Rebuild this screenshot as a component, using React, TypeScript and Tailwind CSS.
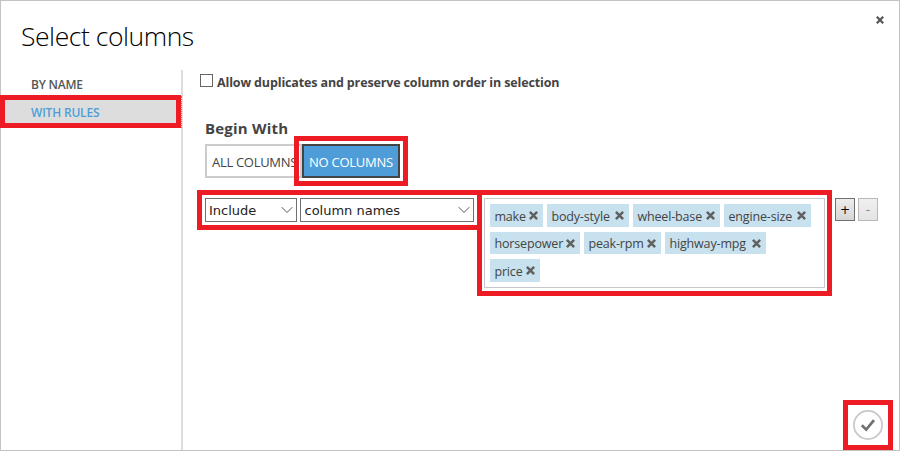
import React from "react";

type Tag = { name: string; box: string; text: string };

const tagRows: { height: string; tags: Tag[] }[] = [
  {
    height: "h-[23px]",
    tags: [
      { name: "make", box: "w-[53px]", text: "w-[31px]" },
      { name: "body-style", box: "w-[82px]", text: "w-[60px]" },
      { name: "wheel-base", box: "w-[87px]", text: "w-[65px]" },
      { name: "engine-size", box: "w-[87px]", text: "w-[65px]" },
    ],
  },
  {
    height: "h-[22px]",
    tags: [
      { name: "horsepower", box: "w-[90px]", text: "w-[68px]" },
      { name: "peak-rpm", box: "w-[77px]", text: "w-[55px]" },
      { name: "highway-mpg", box: "w-[101px]", text: "w-[79px]" },
    ],
  },
  {
    height: "h-[23px]",
    tags: [{ name: "price", box: "w-[50px]", text: "w-[28px]" }],
  },
];

function Cross({ className }: { className: string }) {
  return (
    <svg viewBox="0 0 9 9" className={className}>
      <path d="M.9.9 8.1 8.1M8.1.9.9 8.1" fill="none" stroke="currentColor" strokeWidth="2.5" />
    </svg>
  );
}

function Select({ label, className }: { label: string; className: string }) {
  return (
    <div className={`flex h-6 items-center justify-between border border-[#707070] bg-white pr-[3px] ${className}`}>
      <span className="pt-[2px] font-['DejaVu_Sans',sans-serif] text-[13px] leading-[22px] text-[#222]">{label}</span>
      <svg viewBox="0 0 12 8" className="h-2 w-3 shrink-0 text-[#555]">
        <path d="M.7 1.2 6 6.5 11.3 1.2" fill="none" stroke="currentColor" strokeWidth="1" />
      </svg>
    </div>
  );
}

function Highlight({ className }: { className: string }) {
  return <div className={`pointer-events-none absolute border-[5px] border-[#ed1c24] ${className}`} />;
}

export default function App() {
  return (
    <div className="relative flex h-[451px] w-[900px] flex-col border border-[#c3c3c3] bg-white font-['Open_Sans','Noto_Sans',sans-serif] whitespace-nowrap text-[#444]">
      <header className="flex h-[69px] shrink-0 justify-between pr-[15px] pl-5">
        <h1 className="pt-[15px] text-[26.5px] leading-[40px] font-light tracking-[-0.45px] text-black">Select columns</h1>
        <Cross className="mt-[15px] h-2 w-2 text-[#555]" />
      </header>

      <div className="flex min-h-0 flex-1">
        <nav className="flex w-[182px] shrink-0 flex-col border-r-2 border-[#ddd] text-[12px] font-semibold">
          <div className="h-[26px] pl-[30px] leading-[29px] tracking-[-0.2px] text-[#555]">BY NAME</div>
          <div className="-mr-px h-8 border-r border-dotted border-[#888] bg-[#ddd] pl-[30px] leading-[33px] tracking-[-0.2px] text-[#4f9dd8]">
            WITH RULES
          </div>
        </nav>

        <main className="flex flex-col pl-[17px]">
          <label className="mt-1 flex h-[13px] items-center gap-[4px]">
            <span className="h-[13px] w-[13px] border border-[#666] bg-white" />
            <span className="pt-[4px] text-[12.5px] leading-4 font-bold tracking-[-0.14px]">
              Allow duplicates and preserve column order in selection
            </span>
          </label>

          <h2 className="mt-[30px] pl-[5px] text-[15px] leading-[22px] font-bold tracking-[0.2px]">Begin With</h2>

          <div className="mt-[5px] flex pl-[5px] text-[13px]">
            <div className="h-[34px] w-[97px] overflow-hidden border-2 border-[#ccc] pl-[5px] leading-[32px] tracking-[-0.3px]">
              ALL COLUMNS
            </div>
            <div className="h-[34px] w-[98px] border-2 border-[#444] bg-[#4f9dd8] pl-[5px] leading-[32px] tracking-[-0.25px] text-white">
              NO COLUMNS
            </div>
          </div>

          <div className="mt-5 flex items-start pl-[5px]">
            <Select label="Include" className="w-[92px] pl-[3px]" />
            <Select label="column names" className="ml-[3px] w-[174px] pl-[3.5px]" />
            <div className="ml-[10px] flex h-[90px] w-[341px] flex-col gap-[5px] border border-[#c6c6cc] pt-[5px] pl-[5px]">
              {tagRows.map((row) => (
                <div key={row.tags[0].name} className="flex gap-1">
                  {row.tags.map((tag) => (
                    <div key={tag.name} className={`flex shrink-0 items-center bg-[#c8e1ee] pl-[4.4px] ${row.height} ${tag.box}`}>
                      <span className={`shrink-0 pt-[2px] text-[12.5px] leading-[22px] tracking-[-0.15px] ${tag.text}`}>
                        {tag.name}
                      </span>
                      <Cross className="ml-1 h-[9px] w-[9px] shrink-0 text-[#606060]" />
                    </div>
                  ))}
                </div>
              ))}
            </div>
            <button className="ml-[10px] flex h-[23px] w-5 items-center justify-center border border-[#707070] bg-linear-to-b from-[#ededed] to-[#d6d6d6] pt-px font-['DejaVu_Sans',sans-serif] text-[12px] text-black">
              +
            </button>
            <button className="ml-[3px] flex h-[23px] w-5 items-center justify-center border border-[#b8b8b8] bg-linear-to-b from-[#f0f0f0] to-[#e4e4e4] pt-px font-['DejaVu_Sans',sans-serif] text-[12px] text-[#838383]">
              -
            </button>
          </div>
        </main>
      </div>

      <button className="absolute top-[408px] left-[851px] h-8 w-8">
        <svg viewBox="0 0 32 32" className="h-8 w-8">
          <circle cx="16" cy="16" r="14.1" fill="white" stroke="#c8c8c8" strokeWidth="1.8" />
          <path d="M9.8 16.2 14.2 20.6 22 11.2" fill="none" stroke="#707070" strokeWidth="2.7" />
        </svg>
      </button>

      <Highlight className="top-[94px] left-[-1px] h-[33px] w-[181px]" />
      <Highlight className="top-[135px] left-[293px] h-[50px] w-[114px]" />
      <Highlight className="top-[189px] left-[196px] h-10 w-[285px]" />
      <Highlight className="top-[189px] left-[476px] h-[106px] w-[355px]" />
      <Highlight className="top-[399px] left-[842px] h-[50px] w-[50px]" />
    </div>
  );
}
